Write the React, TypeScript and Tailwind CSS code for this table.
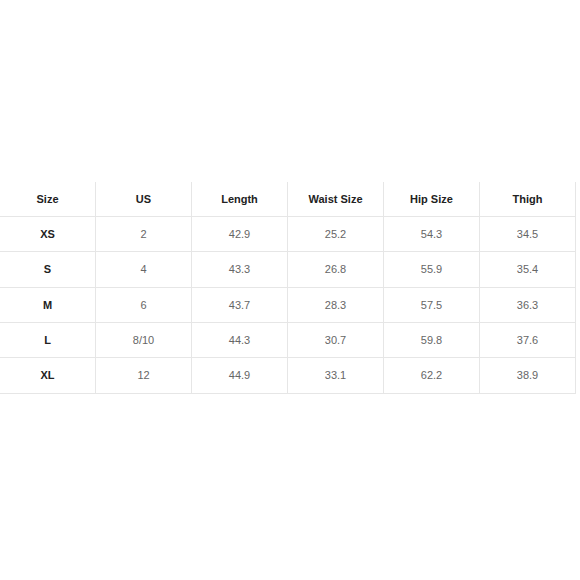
import React from 'react'

const headers = ['Size', 'US', 'Length', 'Waist Size', 'Hip Size', 'Thigh']

const rows = [
  ['XS', '2', '42.9', '25.2', '54.3', '34.5'],
  ['S', '4', '43.3', '26.8', '55.9', '35.4'],
  ['M', '6', '43.7', '28.3', '57.5', '36.3'],
  ['L', '8/10', '44.3', '30.7', '59.8', '37.6'],
  ['XL', '12', '44.9', '33.1', '62.2', '38.9'],
]

// row heights in px, taken from the grid lines in the picture
const rowHeights = ['h-[35px]', 'h-[36px]', 'h-[35px]', 'h-[35px]', 'h-[36px]']

export default function App() {
  return (
    <div className="w-[580px] h-[580px] bg-white pt-[182px] font-['Liberation_Sans',Arial,sans-serif]">
      <div className="w-[576px]">
        <div className="grid grid-cols-6 h-[35px]">
          {headers.map((h) => (
            <div
              key={h}
              className="flex items-center justify-center border-r border-b border-[#e6e6e6] text-[11px] font-bold text-[#222]"
            >
              {h}
            </div>
          ))}
        </div>
        {rows.map((r, i) => (
          <div key={r[0]} className={`grid grid-cols-6 ${rowHeights[i]}`}>
            {r.map((c, j) => (
              <div
                key={j}
                className={`flex items-center justify-center border-r border-b border-[#e6e6e6] text-[11px] ${
                  j === 0 ? 'font-bold text-[#222]' : 'text-[#666]'
                }`}
              >
                {c}
              </div>
            ))}
          </div>
        ))}
      </div>
    </div>
  )
}
